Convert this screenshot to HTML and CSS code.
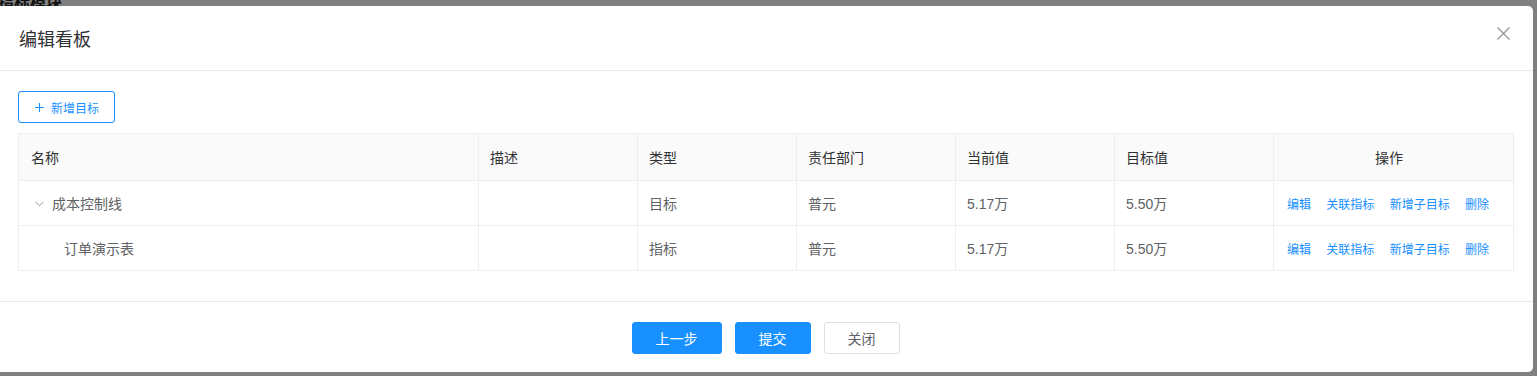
FILE: index.html
```html
<!DOCTYPE html>
<html lang="zh-CN">
<head>
    <meta charset="UTF-8">
    <meta name="viewport" content="width=device-width, initial-scale=1.0">
    <title>编辑看板</title>
    <link rel="stylesheet" href="styles.css">
</head>
<body>

    <!-- page behind the mask -->
    <div class="page-behind">指标模块</div>

    <!-- Edit Board Dialog -->
    <div class="dialog">
        <div class="dialog-header">
            <span class="dialog-title">编辑看板</span>
            <span class="dialog-close">
                <svg width="13" height="13" viewBox="0 0 13 13">
                    <path d="M0.5 0.5 L12.5 12.5 M12.5 0.5 L0.5 12.5" stroke="#909399" stroke-width="1.2" fill="none"/>
                </svg>
            </span>
        </div>

        <div class="dialog-body">
            <a href="#" class="btn-add">
                <svg width="9" height="9" viewBox="0 0 9 9">
                    <path d="M4.5 0 V9 M0 4.5 H9" stroke="#1890ff" stroke-width="1.1" fill="none"/>
                </svg>
                新增目标
            </a>

            <table class="goal-table">
                <colgroup>
                    <col class="col-name">
                    <col class="col-mid">
                    <col class="col-mid">
                    <col class="col-mid">
                    <col class="col-mid">
                    <col class="col-mid">
                    <col class="col-ops">
                </colgroup>
                <thead>
                    <tr>
                        <th>名称</th>
                        <th>描述</th>
                        <th>类型</th>
                        <th>责任部门</th>
                        <th>当前值</th>
                        <th>目标值</th>
                        <th class="th-ops">操作</th>
                    </tr>
                </thead>
                <tbody>
                    <tr>
                        <td>
                            <span class="tree-arrow">
                                <svg width="9" height="6" viewBox="0 0 9 6">
                                    <path d="M0.5 0.8 L4.5 4.8 L8.5 0.8" stroke="#909399" stroke-width="1" fill="none"/>
                                </svg>
                            </span>成本控制线
                        </td>
                        <td></td>
                        <td>目标</td>
                        <td>普元</td>
                        <td>5.17万</td>
                        <td>5.50万</td>
                        <td class="ops">
                            <a href="#">编辑</a>
                            <a href="#">关联指标</a>
                            <a href="#">新增子目标</a>
                            <a href="#">删除</a>
                        </td>
                    </tr>
                    <tr>
                        <td><span class="tree-child">订单演示表</span></td>
                        <td></td>
                        <td>指标</td>
                        <td>普元</td>
                        <td>5.17万</td>
                        <td>5.50万</td>
                        <td class="ops">
                            <a href="#">编辑</a>
                            <a href="#">关联指标</a>
                            <a href="#">新增子目标</a>
                            <a href="#">删除</a>
                        </td>
                    </tr>
                </tbody>
            </table>
        </div>

        <div class="dialog-footer">
            <button class="btn-primary btn-prev">上一步</button>
            <button class="btn-primary">提交</button>
            <button class="btn-plain">关闭</button>
        </div>
    </div>

</body>
</html>
```

FILE: styles.css
```css
body {
    font-family: "Helvetica Neue", "Liberation Sans", "Noto Sans CJK SC", sans-serif;
    margin: 0;
    padding: 0;
    background-color: #808080;
    overflow: hidden;
    height: 376px;
}

.page-behind {
    position: absolute;
    top: -11px;
    left: -2px;
    font-size: 16px;
    font-weight: bold;
    color: #111;
}

/* Dialog */
.dialog {
    position: relative;
    margin-top: 6px;
    width: 1533px;
    height: 366px;
    background-color: #fff;
    border-radius: 0 5px 5px 0;
    display: flex;
    flex-direction: column;
}

.dialog-header {
    height: 65px;
    box-sizing: border-box;
    border-bottom: 1px solid #e8e8e8;
    display: flex;
    align-items: center;
    justify-content: space-between;
    padding: 0 23px 0 19px;
}

.dialog-title {
    font-size: 18px;
    color: #303133;
    margin-top: 0;
}

.dialog-close {
    display: flex;
    margin-top: -10px;
    cursor: pointer;
}

.dialog-body {
    padding: 20px 19px 30px 18px;
    border-bottom: 1px solid #e8e8e8;
}

.btn-add {
    display: inline-flex;
    align-items: center;
    gap: 7px;
    box-sizing: border-box;
    height: 32px;
    width: 97px;
    padding-left: 16px;
    border: 1px solid #1890ff;
    border-radius: 3px;
    color: #1890ff;
    font-size: 12px;
    text-decoration: none;
    vertical-align: top;
}

/* Table */
.goal-table {
    margin-top: 10px;
    width: 1495px;
    border-collapse: collapse;
    table-layout: fixed;
    font-size: 14px;
}

.col-name {
    width: 460px;
}

.col-mid {
    width: 159px;
}

.col-ops {
    width: 240px;
}

.goal-table th,
.goal-table td {
    border: 1px solid #ebeef5;
    text-align: left;
    padding: 0 11px;
    white-space: nowrap;
}

.goal-table th {
    height: 46px;
    background-color: #fafafa;
    color: #303133;
    font-weight: normal;
}

.goal-table th:first-child,
.goal-table td:first-child {
    padding-left: 12px;
}

.goal-table td {
    height: 44px;
    color: #606266;
}

.goal-table .th-ops {
    text-align: center;
    padding-right: 20px;
}

.tree-arrow {
    display: inline-block;
    width: 17px;
    padding-left: 4px;
    vertical-align: 2px;
}

.tree-child {
    padding-left: 33px;
}

.goal-table td.ops {
    padding-left: 13px;
    font-size: 12px;
}

.ops a {
    color: #1890ff;
    text-decoration: none;
    margin-right: 12px;
}

/* Footer */
.dialog-footer {
    display: flex;
    justify-content: center;
    gap: 13px;
    padding-top: 20px;
    padding-right: 2px;
}

.dialog-footer button {
    height: 32px;
    width: 76px;
    font-family: inherit;
    font-size: 14px;
    border-radius: 3px;
    cursor: pointer;
}

.btn-primary {
    background-color: #1890ff;
    border: 1px solid #1890ff;
    color: #fff;
}

.dialog-footer .btn-prev {
    width: 90px;
}

.btn-plain {
    background-color: #fff;
    border: 1px solid #dcdfe6;
    color: #606266;
}
```
